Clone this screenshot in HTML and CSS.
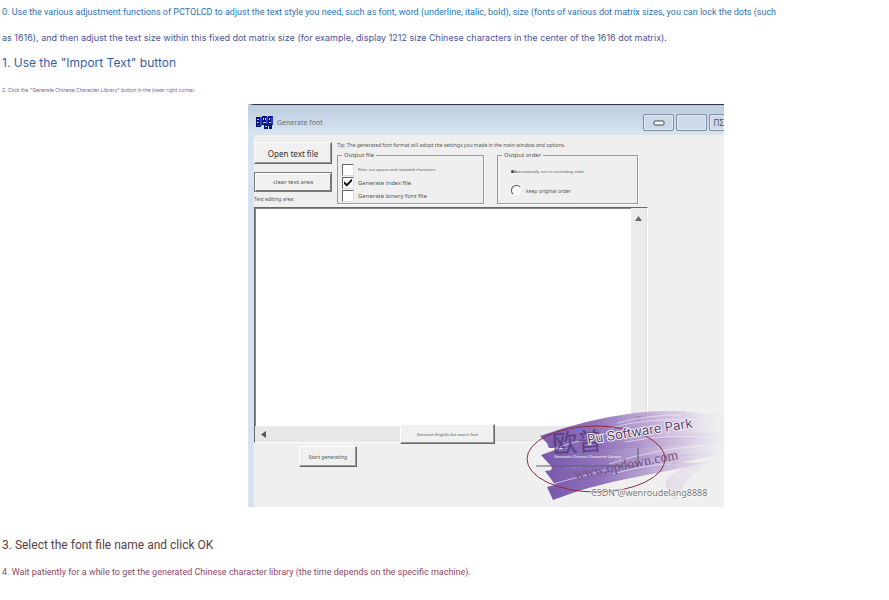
FILE: index.html
```html
<!DOCTYPE html>
<html lang="en">
<head>
<meta charset="utf-8">
<title>Generate font</title>
<link rel="stylesheet" href="styles.css">
</head>
<body>
<main>
  <p class="note intro">0. Use the various adjustment functions of PCTOLCD to adjust the text style you need, such as font, word (underline, italic, bold), size (fonts of various dot matrix sizes, you can lock the dots (such</p>
  <p class="note follow">as 1616), and then adjust the text size within this fixed dot matrix size (for example, display 1212 size Chinese characters in the center of the 1616 dot matrix).</p>
  <h2 class="step import">1. Use the "Import Text" button</h2>
  <p class="small">2. Click the "Generate Chinese Character Library" button in the lower right corner.</p>

  <section class="window">
    <header class="titlebar">
      <svg class="logo" width="17" height="15" viewBox="0 0 17 15" aria-hidden="true">
        <path fill="#08107c" d="M0 2h5v10H0zM6 1h5v9H6zM12 1h5v9h-1v4h-3v-3h-1zM8 9h4v5H8z"/>
        <path fill="#2440e0" d="M4 2h2v9H4zM10 2h2v7h-2zM15 2h2v7h-2zM1 10h3v1H1z"/>
        <path fill="#b9cff3" d="M1 4h2v1H1zM1 7h2v1H1zM7 3h1v2H7zM9 3h1v2H9zM7 7h3v1H7zM13 3h1v2h-1zM13 7h2v1h-2zM9 11h2v1H9z"/>
      </svg>
      <span class="title">Generate font</span>
      <div class="controls">
        <button class="control" aria-label="Minimize"><svg width="12" height="6" viewBox="0 0 12 6"><rect x="1" y="1" width="10" height="4" rx="1" fill="#fff" stroke="#444b55"/></svg></button>
        <button class="control" aria-label="Maximize"></button>
        <button class="control last">ΠΣ</button>
      </div>
    </header>

    <div class="content">
      <div class="options">
        <div class="actions">
          <button class="push open">Open text file</button>
          <button class="push clear">clear text area</button>
          <label class="arealabel" for="area">Text editing area:</label>
        </div>
        <div class="settings">
          <p class="tip">Tip: The generated font format will adopt the settings you made in the main window and options.</p>
          <div class="groups">
            <fieldset class="group files">
              <legend>Output file</legend>
              <label class="check tiny"><input type="checkbox">Filter out spaces and repeated characters</label>
              <label class="check"><input type="checkbox" checked>Generate index file</label>
              <label class="check"><input type="checkbox">Generate binary font file</label>
            </fieldset>
            <fieldset class="group order">
              <legend>Output order</legend>
              <label class="radio tiny"><input class="dot" type="radio" name="order" checked>Automatically sort in ascending order</label>
              <label class="radio keep"><input type="radio" name="order">keep original order</label>
            </fieldset>
          </div>
        </div>
      </div>

      <div class="editor">
        <textarea id="area"></textarea>
        <div class="vbar">
          <svg width="7" height="5" viewBox="0 0 7 5"><path d="M0 5L3.500 0L7 5z" fill="#666"/></svg>
          <svg width="7" height="5" viewBox="0 0 7 5"><path d="M0 0h7L3.500 5z" fill="#666"/></svg>
        </div>
        <div class="hbar">
          <svg width="5" height="7" viewBox="0 0 5 7"><path d="M5 0v7L0 3.500z" fill="#555"/></svg>
        </div>
        <button class="push english">Generate English dot matrix font</button>
      </div>

      <div class="bottom">
        <button class="push start">Start generating</button>
        <button class="push library">Generate Chinese Character Library</button>
      </div>
    </div>

    <svg class="stamp" width="206" height="102" viewBox="0 0 206 102">
      <defs>
        <linearGradient id="ink" gradientUnits="userSpaceOnUse" x1="10" x2="202" y1="60" y2="40">
          <stop offset="0" stop-color="#7555a9"/>
          <stop offset=".32" stop-color="#8b6cb8" stop-opacity=".95"/>
          <stop offset=".6" stop-color="#b7a0d2" stop-opacity=".85"/>
          <stop offset=".8" stop-color="#d5c8e2" stop-opacity=".7"/>
          <stop offset="1" stop-color="#eee8f2" stop-opacity="0"/>
        </linearGradient>
      </defs>
      <g fill="url(#ink)">
        <path d="M13 31Q60 14 108 8Q150 3 196 11L200 38L92 44L22 43L20 38z"/>
        <path d="M14 50L28 45L92 36L200 26L202 50Q120 50 24 66L25 62z"/>
        <path d="M18 66L50 62L125 50L204 48Q140 60 98 68L28 80L24 74z"/>
        <path d="M20 82L55 73L110 64L150 57L180 58Q140 66 104 73Q62 81 26 95z"/>
        <path d="M138 76Q158 55 204 51Q162 60 149 96Q139 88 138 76z" opacity=".35"/>
      </g>
      <path d="M21 45L84 27M22 80L78 65M84 23Q120 12 172 15M82 59Q130 43 177 41M90 18Q126 9 155 10M98 37Q145 28 183 33M86 69Q118 60 144 59" fill="none" stroke="#f2ecf8" opacity=".65"/>
      <text class="brand-cn" x="26" y="48" transform="rotate(-4 26 48)">欧普</text>
      <path d="M9 61h102V43" fill="none" stroke="#625970" stroke-width="1"/>
      <ellipse cx="69" cy="54" rx="69" ry="33" fill="none" stroke="#902840" stroke-width="1"/>
      <text class="brand-en" x="61" y="39" transform="rotate(-9 61 39)">Pu Software Park</text>
      <text class="site" x="48" y="74" transform="rotate(-11 48 74)">www.opdown.com</text>
      <text class="credit" x="64" y="91">CSDN @wenroudelang8888</text>
    </svg>
  </section>

  <h2 class="step select">3. Select the font file name and click OK</h2>
  <p class="small wait">4. Wait patiently for a while to get the generated Chinese character library (the time depends on the specific machine).</p>
</main>
</body>
</html>
```
FILE: styles.css
```css
* { box-sizing: border-box; }
body { margin: 0; background: #fff; font-family: Roboto, "Noto Sans", sans-serif; }
p, h2 { margin: 0; }
main { padding-left: 2px; }
.note { font-size: 9px; line-height: 25px; white-space: nowrap; }
.intro { color: #2c73b4; }
.follow { color: #4a559c; font-family: Inter, sans-serif; }
.step { font-size: 12px; font-weight: 400; line-height: 26px; }
.import { font-family: Inter, sans-serif; color: #375fa4; }
.select { margin-top: 25px; color: #5b4141; }
.small { font-family: Inter, sans-serif; font-size: 5px; line-height: 28px; color: #765f96; }
.wait { font-family: Roboto, sans-serif; font-size: 9px; color: #8d4867; }

.window {
  position: relative;
  margin-left: 246px;
  max-width: 476px;
  background: #efefef;
  border-top: 1px solid #30343c;
  border-left: 6px solid #d5e3f1;
  font-family: "Noto Sans", sans-serif;
  color: #555;
}
button { font: inherit; color: inherit; padding: 0; margin: 0; }
.titlebar {
  display: flex;
  align-items: center;
  gap: 4px;
  height: 30px;
  margin-left: -6px;
  padding-left: 8px;
  padding-top: 4px;
  background: linear-gradient(#bccddf, #d8e4f0);
}
.title { font-size: 7px; color: #667180; }
.controls { display: flex; gap: 2px; margin-left: auto; }
.control {
  width: 31px;
  height: 17px;
  border: 1px solid #7c8da5;
  border-radius: 2px;
  background: #cbd9e8;
  box-shadow: inset 0 0 0 1px #dfe9f3;
  font-size: 8px;
  line-height: 13px;
}
.control.last { width: 15px; border-right: 0; border-radius: 2px 0 0 2px; text-align: right; }

.options { display: flex; gap: 5px; height: 72px; padding-top: 7px; }
.actions { display: flex; flex-direction: column; width: 78px; }
.push {
  background: #f0f0f0;
  border: 1px solid;
  border-color: #fff #666 #666 #fff;
  box-shadow: inset -1px -1px #999;
}
.open { height: 22px; font-size: 8px; color: #333; }
.clear { height: 20px; margin-top: 8px; font-size: 6px; border: 1px solid #777; box-shadow: inset 1px 1px #fff, inset -1px -1px #777; }
.arealabel { font-size: 5px; line-height: 15px; }
.settings { flex: 1; min-width: 0; }
.tip { font-size: 5px; line-height: 7px; white-space: nowrap; }
.groups { display: flex; gap: 13px; }
.group { height: 55px; margin: 0; padding: 2px 4px 0; border: 1px solid #999; box-shadow: 1px 1px #fff; min-width: 0; }
.group legend { font-size: 6px; line-height: 12px; padding: 0 2px; }
.files { width: 147px; }
.order { width: 141px; padding-left: 13px; }
.order legend { margin-left: -9px; }
.check, .radio { display: flex; align-items: center; gap: 4px; height: 13px; font-size: 6px; white-space: nowrap; }
.check.tiny, .radio.tiny { font-size: 4px; }
input { appearance: none; margin: 0; background: #fff; }
.check input { width: 12px; height: 12px; border: 1px solid; border-color: #666 #ddd #ddd #666; }
.check input:checked {
  display: grid;
  place-items: center;
}
.check input:checked::before {
  content: "";
  width: 8px;
  height: 8px;
  background: #111;
  clip-path: polygon(0 35%, 35% 65%, 100% 0, 100% 35%, 35% 100%, 0 70%);
}
.radio input { width: 11px; height: 11px; border: 1px solid; border-color: #555 #eee #eee #555; border-radius: 50%; }
.radio.tiny { gap: 0; margin-top: 2px; }
.radio input.dot { width: 3px; height: 3px; border: 0; background: #444; }
.keep { margin-top: 6px; font-size: 5px; }

.editor {
  position: relative;
  display: grid;
  grid-template-columns: 1fr 16px;
  grid-template-rows: 218px 16px;
  width: 394px;
  max-width: 100%;
  border: 1px solid;
  border-color: #666 #fff #fff #666;
  box-shadow: inset 1px 1px #888;
}
textarea { border: 0; border-top: 1px solid #888; border-left: 1px solid #888; margin: 0; padding: 4px; background: #fff; resize: none; width: 100%; height: 100%; }
.vbar { display: flex; flex-direction: column; justify-content: space-between; align-items: center; padding: 8px 0 5px; background: #ebebeb; border-right: 1px solid #ddd; }
.hbar { grid-column: 1 / -1; display: flex; align-items: center; padding-left: 6px; background: #e8e8e8; }
.english { position: absolute; left: 145px; bottom: -2px; width: 95px; height: 20px; font-size: 4px; }
.bottom { display: flex; gap: 179px; height: 64px; padding: 3px 0 0 45px; }
.start { width: 58px; height: 21px; font-size: 5px; }
.library { position: relative; z-index: 2; width: 103px; height: 21px; border-color: transparent; background: none; box-shadow: none; color: #fff; font-size: 4px; }
.stamp { position: absolute; right: -9px; bottom: 0; overflow: visible; }
.brand-cn { font: 25px "Noto Sans CJK SC", sans-serif; fill: #49306f; opacity: .7; }
.brand-en { font: 13px Inter, sans-serif; fill: #59446f; stroke: #f3eef7; stroke-width: 2px; paint-order: stroke; }
.site { font: 14px "Liberation Serif", serif; fill: #705282; }
.credit { font: 9px "Noto Sans", sans-serif; fill: #777; stroke: #fff; stroke-width: 1px; paint-order: stroke; }
```
